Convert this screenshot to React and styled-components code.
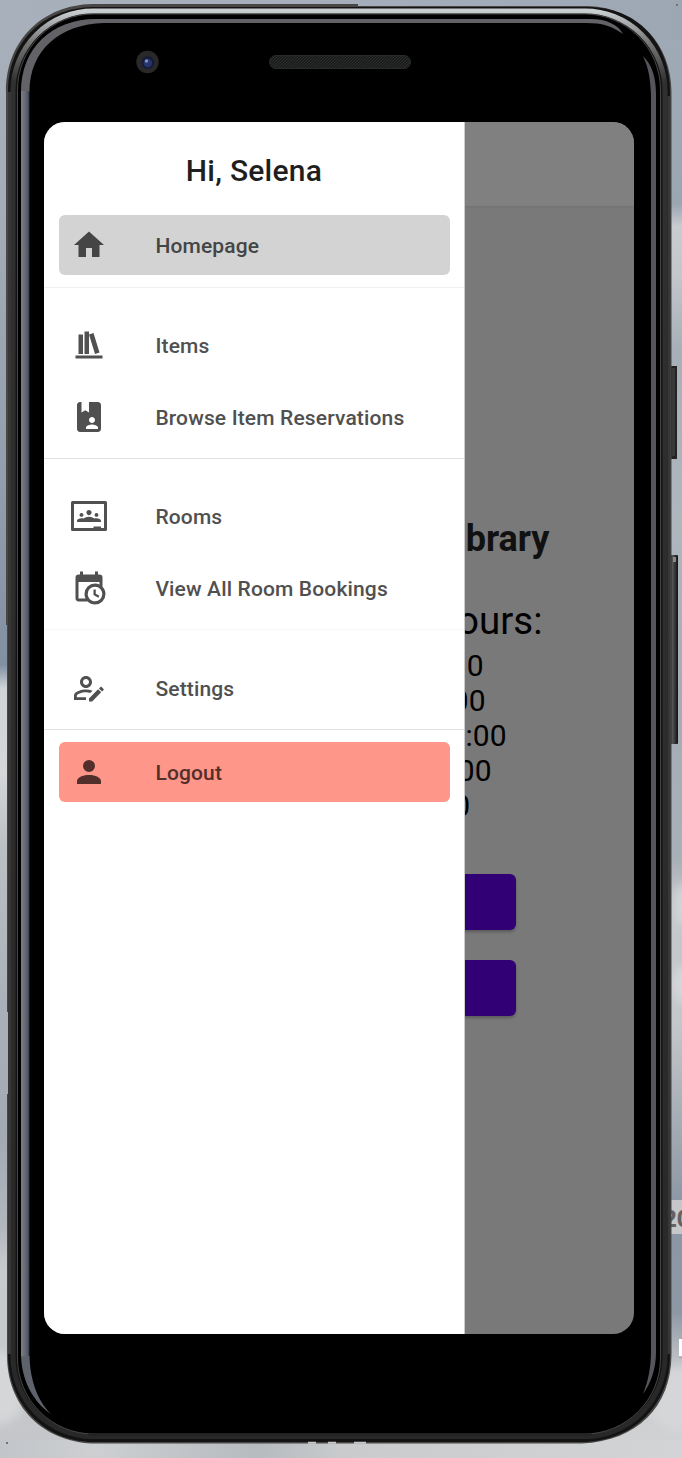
import React from "react";
import styled, { createGlobalStyle } from "styled-components";

const GlobalStyle = createGlobalStyle`
  *, *::before, *::after { box-sizing: border-box; }
  body { margin: 0; overflow: hidden; font-family: Roboto, "Liberation Sans", sans-serif; }
`;

const Desktop = styled.main`
  position: relative;
  width: 682px;
  height: 1458px;
  overflow: hidden;
  padding: 122px 48px 124px 44px;
`;

const Backdrop = styled.svg`
  position: absolute;
  inset: 0;
  width: 682px;
  height: 1458px;
`;

const DesktopLabel = styled.div`
  position: absolute;
  left: 656px;
  top: 1200px;
  width: 60px;
  height: 34px;
  padding-left: 7px;
  background: #c6c7c9;
  color: #626262;
  font: 700 24px/35px "Open Sans", sans-serif;
`;

const Screen = styled.section`
  position: relative;
  width: 590px;
  height: 1212px;
  border-radius: 21px;
  overflow: hidden;
  background: #797979;
`;

const AppBar = styled.header`
  height: 84px;
  background: #808080;
  box-shadow: 0 1px 3px rgba(0, 0, 0, 0.06);
`;

const Content = styled.div`
  display: flex;
  flex-direction: column;
  align-items: flex-end;
  padding-top: 309px;
`;

const Heading = styled.h1`
  margin: 0 84.500px 0 0;
  font-size: 36px;
  font-weight: 700;
  line-height: 48px;
  color: #111;
`;

const Subheading = styled.h2`
  margin: 32px 91.500px 1px 0;
  font-size: 38.500px;
  font-weight: 400;
  line-height: 52px;
  color: #000;
`;

const Hours = styled.p`
  margin: 0 ${(p) => p.$end}px 0 0;
  font-size: 30px;
  line-height: 35px;
  color: #000;
`;

const Actions = styled.div`
  display: flex;
  flex-direction: column;
  gap: 30px;
  margin: 51px 118px 0 0;
`;

const Action = styled.button`
  width: 354px;
  height: 56px;
  border: 0;
  border-radius: 6px;
  background: #310075;
  box-shadow: 0 2px 3px rgba(0, 0, 0, 0.25);
`;

const Drawer = styled.nav`
  position: absolute;
  top: 0;
  left: 0;
  width: 421px;
  height: 100%;
  background: #fff;
  border-right: 1px solid #ccc;
`;

const Greeting = styled.h2`
  height: 93px;
  margin: 0;
  padding-top: 29px;
  text-align: center;
  font-size: 30px;
  font-weight: 500;
  line-height: 40px;
  letter-spacing: 0.25px;
  color: #1f1f1f;
`;

const Group = styled.div`
  display: flex;
  flex-direction: column;
  gap: 12px;
  padding: ${(p) => p.$top}px 14px ${(p) => p.$bottom}px 15px;
  border-bottom: ${(p) => (p.$line ? `1px solid ${p.$line}` : "0")};
`;

const Item = styled.a`
  display: flex;
  align-items: center;
  gap: 48px;
  height: 60px;
  padding: 0 12.400px;
  border-radius: 6px;
  background: ${(p) => p.$fill || "transparent"};
  color: ${(p) => p.$ink || "#505050"};
`;

const Icon = styled.svg`
  width: 36px;
  height: 36px;
  flex: none;
  fill: currentColor;
`;

const Label = styled.span`
  padding-top: 2px;
  font-size: 21px;
  font-weight: 500;
  line-height: 30px;
  letter-spacing: 0.15px;
  white-space: nowrap;
`;

const icons = {
  home: "M10,20V14H14V20H19V12H22L12,3L2,12H5V20H10Z",
  shelf: "M9 3V18H12V3H9M12 5L16 18L19 17L15 4L12 5M5 5V18H8V5H5M3 19V21H21V19H3Z",
  bookAccount:
    "M18 2C19.1 2 20 2.9 20 4V20C20 21.1 19.1 22 18 22H6C4.9 22 4 21.1 4 20V4C4 2.9 4.9 2 6 2H7V9L9.5 7.5L12 9V2H18M14 12C12.9 12 12 12.9 12 14S12.9 16 14 16 16 15.1 16 14 15.1 12 14 12M18 20V19C18 17.67 15.33 17 14 17S10 17.67 10 19V20H18Z",
  classroom:
    "M23,2H1A1,1 0 0,0 0,3V21A1,1 0 0,0 1,22H23A1,1 0 0,0 24,21V3A1,1 0 0,0 23,2M22,20H20V19H15V20H2V4H22V20M10.29,9.71A1.71,1.71 0 0,1 12,8C12.95,8 13.71,8.77 13.71,9.71C13.71,10.66 12.95,11.43 12,11.43C11.05,11.43 10.29,10.66 10.29,9.71M5.71,11.29C5.71,10.58 6.29,10 7,10A1.29,1.29 0 0,1 8.29,11.29C8.29,12 7.71,12.57 7,12.57C6.29,12.57 5.71,12 5.71,11.29M15.71,11.29A1.29,1.29 0 0,1 17,10A1.29,1.29 0 0,1 18.29,11.29C18.29,12 17.71,12.57 17,12.57C16.29,12.57 15.71,12 15.71,11.29M20,15.14V16H4V15.14C4,14.2 5.55,13.43 7,13.43C7.55,13.43 8.11,13.54 8.6,13.73C9.35,13.04 10.7,12.57 12,12.57C13.3,12.57 14.65,13.04 15.4,13.73C15.89,13.54 16.45,13.43 17,13.43C18.45,13.43 20,14.2 20,15.14Z",
  calendarClock:
    "M15,13H16.5V15.82L18.94,17.23L18.19,18.53L15,16.69V13M19,8H5V19H9.67C9.24,18.09 9,17.07 9,16A7,7 0 0,1 16,9C17.07,9 18.09,9.24 19,9.67V8M5,21C3.89,21 3,20.1 3,19V5C3,3.89 3.89,3 5,3H6V1H8V3H16V1H18V3H19A2,2 0 0,1 21,5V11.1C22.24,12.36 23,14.09 23,16A7,7 0 0,1 16,23C14.09,23 12.36,22.24 11.1,21H5M16,11.15A4.85,4.85 0 0,0 11.15,16C11.15,18.68 13.32,20.85 16,20.85A4.85,4.85 0 0,0 20.85,16C20.85,13.32 18.68,11.15 16,11.15Z",
  accountEdit:
    "M2 17V20H10V18.11H3.9V17C3.9 16.36 7.03 14.9 10 14.9C10.96 14.91 11.91 15.04 12.83 15.28L14.35 13.76C12.95 13.29 11.5 13.03 10 13C7.33 13 2 14.33 2 17M10 4C7.79 4 6 5.79 6 8S7.79 12 10 12 14 10.21 14 8 12.21 4 10 4M10 10C8.9 10 8 9.11 8 8S8.9 6 10 6 12 6.9 12 8 11.11 10 10 10M21.7 13.35L20.7 14.35L18.65 12.35L19.65 11.35C19.86 11.14 20.21 11.14 20.42 11.35L21.7 12.63C21.91 12.84 21.91 13.19 21.7 13.4M12 18.94L18.06 12.88L20.11 14.88L14.11 20.95H12V18.94",
  account:
    "M12,4A4,4 0 0,1 16,8A4,4 0 0,1 12,12A4,4 0 0,1 8,8A4,4 0 0,1 12,4M12,14C16.42,14 20,15.79 20,18V20H4V18C4,15.79 7.58,14 12,14Z",
};

const groups = [
  { top: 0, bottom: 12, line: "#f1f1f1", items: [{ icon: "home", label: "Homepage", fill: "#d3d3d3", ink: "#454545" }] },
  { top: 27, bottom: 11, line: "#e2e2e2", items: [{ icon: "shelf", label: "Items" }, { icon: "bookAccount", label: "Browse Item Reservations" }] },
  { top: 27, bottom: 11, line: "#f8f8f8", items: [{ icon: "classroom", label: "Rooms" }, { icon: "calendarClock", label: "View All Room Bookings" }] },
  { top: 28, bottom: 11, line: "#e2e2e2", items: [{ icon: "accountEdit", label: "Settings" }] },
  { top: 12, bottom: 0, items: [{ icon: "account", label: "Logout", fill: "#ff968a", ink: "#532f2b" }] },
];

const hours = [
  { text: "0", end: 150.5 },
  { text: "00", end: 148.5 },
  { text: ":00", end: 127.5 },
  { text: "00", end: 142.5 },
  { text: "0", end: 164 },
];

function Gradient({ id, stops, across }) {
  return (
    <linearGradient id={id} x1="0" y1="0" x2={across ? 1 : 0} y2={across ? 0 : 1}>
      {stops.map(([at, color]) => (
        <stop key={at} offset={at} stopColor={color} />
      ))}
    </linearGradient>
  );
}

function Sky() {
  return (
    <Backdrop viewBox="0 0 682 1458" aria-hidden="true">
      <defs>
        <Gradient id="skyL" stops={[[0, "#a6afba"], [0.15, "#a3acb7"], [0.33, "#929ead"], [0.456, "#8290a3"], [0.472, "#cfd3d7"], [0.53, "#d5d7d9"], [0.58, "#bbc0c4"], [0.7, "#a8afb8"], [0.78, "#a2aab4"], [0.84, "#b2b7be"], [0.87, "#c7cacd"], [1, "#c4c6c9"]]} />
        <Gradient id="skyR" stops={[[0, "#a1abb7"], [0.14, "#9ba6b3"], [0.155, "#c8cbcf"], [0.19, "#c3c6cb"], [0.24, "#a7afb8"], [0.36, "#afb6be"], [0.48, "#a3acb7"], [0.59, "#aab0b8"], [0.62, "#c4c7cb"], [0.7, "#c5c8cb"], [0.79, "#9ca4ae"], [0.83, "#8b96a4"], [0.9, "#8e98a5"], [0.94, "#c8cacd"], [1, "#d1d3d4"]]} />
        <Gradient id="skyTop" across stops={[[0, "#a8b0bb"], [0.5, "#a5aeba"], [1, "#9da7b4"]]} />
        <Gradient id="skyBottom" across stops={[[0, "#c2c5c9"], [0.14, "#cdcfd1"], [0.38, "#b6bbc0"], [0.5, "#c9cbcd"], [1, "#d2d4d5"]]} />
        <filter id="soft"><feGaussianBlur stdDeviation="5" /></filter>
      </defs>
      <path d="M0 0H341V1458H0z" fill="url(#skyL)" />
      <path d="M341 0H682V1458H341z" fill="url(#skyR)" />
      <path d="M0 0H682V40H0z" fill="url(#skyTop)" />
      <path d="M0 1440H682V1458H0z" fill="url(#skyBottom)" />
      <g filter="url(#soft)" fill="#d4d6d8">
        <ellipse cx="682" cy="905" rx="7" ry="22" />
        <ellipse cx="682" cy="984" rx="10" ry="19" />
        <ellipse cx="0" cy="1388" rx="26" ry="36" />
        <ellipse cx="682" cy="1400" rx="35" ry="33" />
      </g>
      <path d="M676 4h2v2h-2zM6 1442h2v2H6z" fill="#717477" />
      <path d="M679 1339h3v18h-3z" fill="#fff" />
      <path d="M679 1357h3" stroke="#888" />
    </Backdrop>
  );
}

function PhoneBody() {
  return (
    <Backdrop viewBox="0 0 682 1458" aria-hidden="true">
      <defs>
        <Gradient id="rim" stops={[[0, "#c9ced1"], [0.022, "#777"], [0.05, "#303030"], [1, "#292828"]]} />
        <Gradient id="shine" across stops={[[0, "#7c7c83"], [0.45, "#686b75"], [0.8, "#505765"], [1, "#2a303b"]]} />
        <Gradient id="key" across stops={[[0, "#111"], [0.3, "#555"], [0.65, "#333"], [1, "#111"]]} />
        <pattern id="mesh" width="3" height="3" patternUnits="userSpaceOnUse">
          <path d="M0 0h3v3H0z" fill="#1b1c1c" />
          <path d="M0 0h1v1H0zM2 1h1v1H2zM1 2h1v1H1z" fill="#2c2e2e" />
        </pattern>
      </defs>
      <path d="M668 366h9v93h-9z" fill="#232323" />
      <path d="M672 368h3v88h-3z" fill="#393939" />
      <rect x="670" y="555" width="8" height="189" rx="1" fill="url(#key)" />
      <path d="M673 557h3v5h-3z" fill="#888" />
      <path d="M6 92C6 39 44 5 92 4H358V6H588C639 8 671 45 671.5 91V1355C671 1407 637 1441 582 1443.500H92C42 1441 7 1406 7 1355V1094H8V1012H7V625H6z" fill="#484746" />
      <path d="M8 91C8 42 43 8 93 7H588C635 7 670 41 670 92V1355C670 1404 634 1442 581 1442H94C43 1442 8 1403 8 1355z" fill="#131313" />
      <rect x="13" y="11" width="652" height="1425.500" rx="80" fill="none" stroke="url(#rim)" strokeWidth="5" />
      <path d="M9.500 92V1354M669 96V1354" stroke="#393636" strokeWidth="3" />
      <rect x="17.500" y="14" width="643" height="1420" rx="76" fill="#000" stroke="#555" strokeWidth=".8" />
      <path d="M88 1434.500H592" stroke="#222" strokeWidth="2" />
      <path d="M21 92C21 48 52 19 96 19H590C607 19 618 25 623 34C612 26 602 23 586 23H104C60 24 29.500 50 29.500 92z" fill="#626267" />
      <rect x="21" y="91" width="8.500" height="1266" fill="url(#shine)" />
      <path d="M21 1356H29.500C30 1382 39 1403 52 1415C31 1400 22 1379 21 1356z" fill="#5e626c" />
      <path d="M643 56C652 65 656 77 656 94V1352C656 1369 651 1383 643 1394C648 1382 651 1367 651 1352V94C650 78 649 69 643 56z" fill="#55565b" />
      <circle cx="147.500" cy="62" r="11.200" fill="#292929" />
      <circle cx="147.800" cy="62.500" r="6.300" fill="#151b38" />
      <circle cx="147.800" cy="63" r="4.300" fill="#26366c" />
      <circle cx="146.500" cy="61" r="1.700" fill="#8291b6" />
      <rect x="269.500" y="55.500" width="141" height="13" rx="6.500" fill="url(#mesh)" stroke="#2a2b2b" />
      <path d="M308 1441.700h8v2h-8zM328 1441.700h8v2h-8zM354 1441.700h12v2h-12z" fill="#c7c9cb" />
    </Backdrop>
  );
}

function DrawerItem({ icon, label, fill, ink }) {
  return (
    <Item $fill={fill} $ink={ink}>
      <Icon viewBox="0 0 24 24" aria-hidden="true"><path d={icons[icon]} /></Icon>
      <Label>{label}</Label>
    </Item>
  );
}

export default function App() {
  return (
    <>
      <GlobalStyle />
      <Desktop>
        <Sky />
        <DesktopLabel>20</DesktopLabel>
        <PhoneBody />
        <Screen>
          <AppBar />
          <Content>
            <Heading>Library</Heading>
            <Subheading>Hours:</Subheading>
            {hours.map((h, i) => <Hours key={i} $end={h.end}>{h.text}</Hours>)}
            <Actions>
              <Action />
              <Action />
            </Actions>
          </Content>
          <Drawer>
            <Greeting>Hi, Selena</Greeting>
            {groups.map((g, i) => (
              <Group key={i} $top={g.top} $bottom={g.bottom} $line={g.line}>
                {g.items.map((item) => <DrawerItem key={item.label} {...item} />)}
              </Group>
            ))}
          </Drawer>
        </Screen>
      </Desktop>
    </>
  );
}
